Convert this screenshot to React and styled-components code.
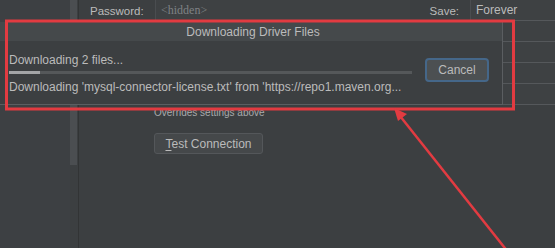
import React from "react";
import styled, { createGlobalStyle } from "styled-components";

const Global = createGlobalStyle`
  html, body { margin: 0; padding: 0; background: #3c3f41; }
  body { width: 555px; height: 248px; overflow: hidden; font-family: "Liberation Sans", Arial, sans-serif; font-size: 12px; color: #bbbbbb; }
`;

const Page = styled.div`
  position: relative;
  width: 555px;
  height: 248px;
  display: flex;
  background: #3c3f41;
  overflow: hidden;
`;

const Sidebar = styled.div`
  width: 70px;
  flex: none;
  background: #3d4043;
`;

const ScrollTrack = styled.div`
  width: 8px;
  flex: none;
  background: #3c3f41;
  border-right: 1px solid #323435;
`;

const ScrollThumb = styled.div`
  width: 7px;
  height: 165px;
  background: #4b4e51;
`;

const Content = styled.div`
  flex: 1;
  display: flex;
  flex-direction: column;
  padding-left: 11px;
`;

const Row = styled.div`
  display: flex;
  align-items: center;
  height: ${(p) => p.h || 21}px;
`;

const Label = styled.div`
  width: ${(p) => p.w}px;
  flex: none;
  font-size: 11.5px;
  color: #bbbbbb;
  text-align: ${(p) => p.align || "left"};
  padding-right: ${(p) => p.pr || 0}px;
  box-sizing: border-box;
`;

const Field = styled.div`
  height: 100%;
  width: ${(p) => (p.w ? p.w + "px" : "auto")};
  flex: ${(p) => (p.w ? "none" : 1)};
  box-sizing: border-box;
  border-left: 1px solid #4a4d50;
  border-bottom: 1px solid #55585b;
  background: #3e4143;
  display: flex;
  align-items: center;
  padding-left: 5px;
  font-size: 12px;
  color: ${(p) => (p.hint ? "#7f8285" : "#bbbbbb")};
  font-family: ${(p) => (p.hint ? '"Liberation Serif", serif' : '"Liberation Sans", Arial, sans-serif')};
`;

const Spacer = styled.div`
  height: ${(p) => p.h}px;
  flex: none;
`;

const Note = styled.div`
  padding-left: 64px;
  font-size: 10px;
  color: #a9abad;
  height: 14px;
  line-height: 14px;
`;

const TestButton = styled.button`
  margin-left: 64px;
  width: 109px;
  height: 21px;
  box-sizing: border-box;
  background: #45484a;
  border: 1px solid #54575a;
  border-radius: 3px;
  color: #bbbbbb;
  font-family: "Liberation Sans", Arial, sans-serif;
  font-size: 12px;
  padding: 0;
  u { text-decoration: underline; text-underline-offset: 2px; }
`;

const Dialog = styled.div`
  position: absolute;
  left: 0;
  top: 22px;
  width: 503px;
  height: 83px;
  box-sizing: border-box;
  background: #3c3f41;
  border-bottom: 1px solid #5b5e61;
  border-right: 1px solid #5b5e61;
  display: flex;
  flex-direction: column;
`;

const TitleBar = styled.div`
  height: 19px;
  flex: none;
  background: #45494b;
  display: flex;
  align-items: center;
  justify-content: center;
  font-size: 12px;
  color: #bbbbbb;
  padding-left: 4px;
`;

const Body = styled.div`
  flex: 1;
  display: flex;
  align-items: center;
  padding: 0 13px 0 9px;
  gap: 13px;
`;

const Progress = styled.div`
  flex: 1;
  display: flex;
  flex-direction: column;
  padding-top: 2px;
`;

const StatusText = styled.div`
  font-size: 12px;
  color: #bbbbbb;
  height: 16px;
  line-height: 16px;
  white-space: nowrap;
`;

const Track = styled.div`
  height: 3px;
  margin: 3px 0 5px;
  width: 403px;
  background: #55585a;
`;

const Fill = styled.div`
  height: 100%;
  background: #a3a5a7;
`;

const CancelButton = styled.button`
  width: 66px;
  height: 24px;
  box-sizing: border-box;
  margin-top: -6px;
  background: #4c5052;
  border: 2px solid #456789;
  border-radius: 4px;
  color: #bbbbbb;
  font-family: "Liberation Sans", Arial, sans-serif;
  font-size: 12px;
  padding: 0;
`;

const Annotation = styled.svg`
  position: absolute;
  left: 0;
  top: 0;
  pointer-events: none;
`;

export default function App() {
  const progress = 31;
  return (
    <>
      <Global />
      <Page>
        <Sidebar />
        <ScrollTrack>
          <ScrollThumb />
        </ScrollTrack>
        <Content>
          <Row h={21}>
            <Label w={65}>Password:</Label>
            <Field w={255} hint>&lt;hidden&gt;</Field>
            <Label w={60} align="right" pr={11}>Save:</Label>
            <Field>Forever</Field>
          </Row>
          <Row h={21}>
            <Label w={380} />
            <Field />
          </Row>
          <Row h={21}>
            <Label w={380} />
            <Field />
          </Row>
          <Row h={21}>
            <Label w={380} />
            <Field />
          </Row>
          <Row h={21}>
            <Label w={380} />
            <Field />
          </Row>
          <Spacer h={1} />
          <Note>Overrides settings above</Note>
          <Spacer h={13} />
          <TestButton>
            <u>T</u>est Connection
          </TestButton>
        </Content>

        <Dialog>
          <TitleBar>Downloading Driver Files</TitleBar>
          <Body>
            <Progress>
              <StatusText>Downloading 2 files...</StatusText>
              <Track>
                <Fill style={{ width: `${progress}px` }} />
              </Track>
              <StatusText>
                Downloading 'mysql-connector-license.txt' from 'https://repo1.maven.org...
              </StatusText>
            </Progress>
            <CancelButton>Cancel</CancelButton>
          </Body>
        </Dialog>

        <Annotation width="555" height="248" viewBox="0 0 555 248">
          <rect x="6.5" y="21" width="507" height="88" fill="none" stroke="#e23b41" strokeWidth="3" />
          <line x1="508" y1="252" x2="400" y2="116" stroke="#e23b41" strokeWidth="2.5" />
          <polygon points="394,108 398,121 407,114" fill="#e23b41" />
        </Annotation>
      </Page>
    </>
  );
}
